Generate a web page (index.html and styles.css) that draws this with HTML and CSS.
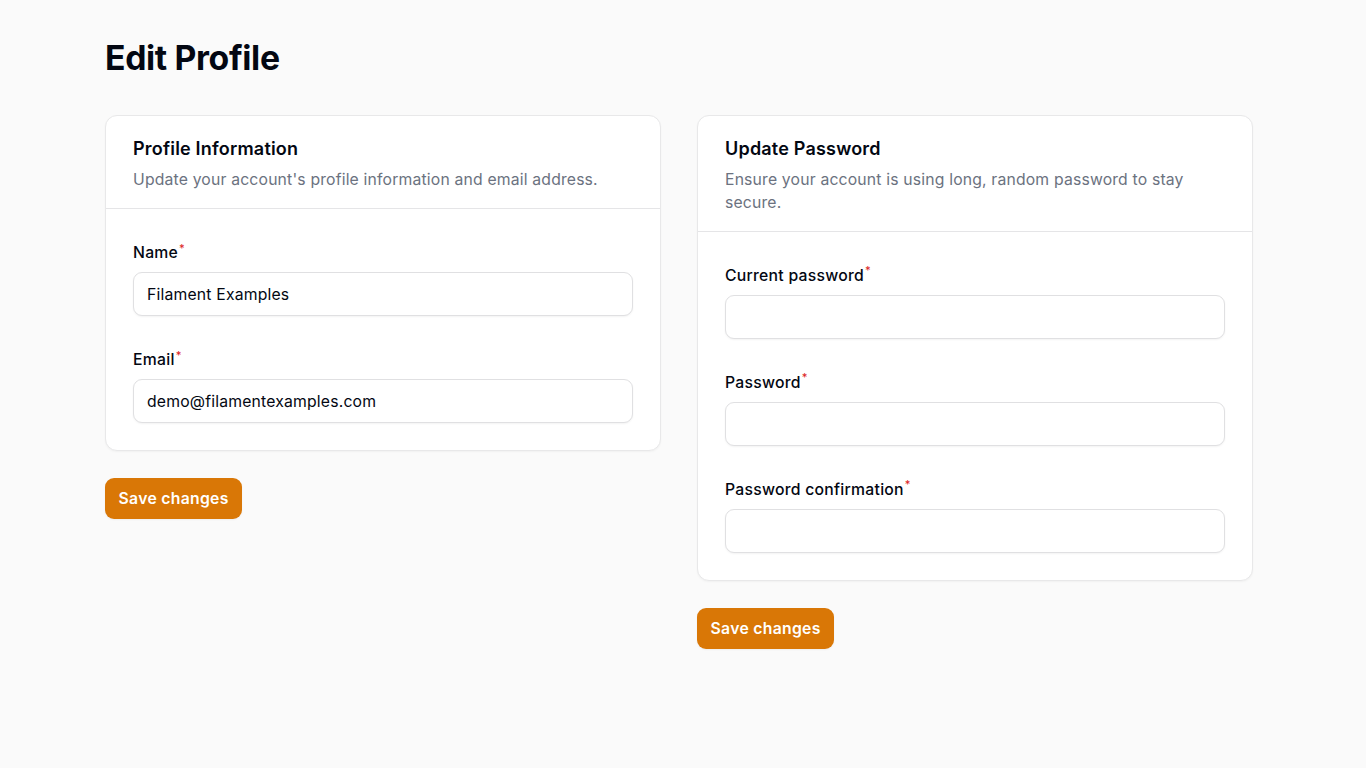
FILE: index.html
```html
<!DOCTYPE html>
<html lang="en">
<head>
    <meta charset="UTF-8">
    <meta name="viewport" content="width=device-width, initial-scale=1.0">
    <title>Edit Profile</title>
    <link rel="stylesheet" href="styles.css">
</head>
<body>
    <main class="page">
        <h1 class="page-title">Edit Profile</h1>

        <div class="columns">
            <form class="column">
                <section class="card">
                    <header class="card-header">
                        <h2 class="card-title">Profile Information</h2>
                        <p class="card-desc">Update your account's profile information and email address.</p>
                    </header>
                    <div class="card-body">
                        <div class="field">
                            <label class="field-label" for="name">Name<sup class="req">*</sup></label>
                            <input class="field-input" type="text" id="name" value="Filament Examples">
                        </div>
                        <div class="field">
                            <label class="field-label" for="email">Email<sup class="req">*</sup></label>
                            <input class="field-input" type="email" id="email" value="demo@filamentexamples.com">
                        </div>
                    </div>
                </section>
                <button type="submit" class="btn">Save changes</button>
            </form>

            <form class="column">
                <section class="card">
                    <header class="card-header">
                        <h2 class="card-title">Update Password</h2>
                        <p class="card-desc">Ensure your account is using long, random password to stay secure.</p>
                    </header>
                    <div class="card-body">
                        <div class="field">
                            <label class="field-label" for="current_password">Current password<sup class="req">*</sup></label>
                            <input class="field-input" type="password" id="current_password">
                        </div>
                        <div class="field">
                            <label class="field-label" for="password">Password<sup class="req">*</sup></label>
                            <input class="field-input" type="password" id="password">
                        </div>
                        <div class="field">
                            <label class="field-label" for="password_confirmation">Password confirmation<sup class="req">*</sup></label>
                            <input class="field-input" type="password" id="password_confirmation">
                        </div>
                    </div>
                </section>
                <button type="submit" class="btn">Save changes</button>
            </form>
        </div>
    </main>
</body>
</html>
```

FILE: styles.css
```css
html, body {
    margin: 0;
    padding: 0;
    background-color: #fafafa;
    color: #030712;
    font-family: Inter, "Noto Sans", Arial, sans-serif;
}

.page {
    width: 1148px;
    padding: 38px 0 36px 105px;
}

.page-title {
    margin: 0 0 36px 0;
    font-size: 33.75px;
    line-height: 40.5px;
    font-weight: 700;
    letter-spacing: -0.35px;
}

.columns {
    display: grid;
    grid-template-columns: 1fr 1fr;
    column-gap: 36px;
    align-items: start;
}

.column {
    display: flex;
    flex-direction: column;
    align-items: flex-start;
    gap: 27px;
}

.card {
    align-self: stretch;
    background: #ffffff;
    border: 1px solid #e8e8e9;
    border-radius: 12px;
    box-shadow: 0 1px 2px rgba(0, 0, 0, 0.04);
}

.card-header {
    padding: 19px 27px 16.5px 27px;
    border-bottom: 1px solid #e5e5e7;
}

.card-title {
    margin: 0;
    font-size: 18px;
    line-height: 27px;
    font-weight: 600;
    letter-spacing: 0.2px;
}

.card-desc {
    margin: 7.5px 0 0 0;
    font-size: 15.75px;
    line-height: 22.5px;
    color: #6b7280;
    letter-spacing: 0.17px;
}

.card-body {
    padding: 27px;
    display: flex;
    flex-direction: column;
    gap: 27px;
}

.field {
    display: flex;
    flex-direction: column;
    gap: 6px;
}

.field-label {
    padding-top: 3px;
    font-size: 15.75px;
    line-height: 27px;
    font-weight: 500;
    letter-spacing: 0.25px;
}

.req {
    color: #dc2626;
    font-weight: 500;
    font-size: 11px;
    line-height: 0;
    margin-left: 1px;
}

.field-input {
    box-sizing: border-box;
    width: 100%;
    height: 44px;
    padding: 0 13px;
    border: 1px solid #e0e0e2;
    border-radius: 9px;
    background: #ffffff;
    box-shadow: 0 1px 2px rgba(0, 0, 0, 0.05);
    font-family: inherit;
    font-size: 15.75px;
    letter-spacing: 0.18px;
    color: #030712;
    outline: none;
}

.btn {
    padding: 9px 13.5px;
    border: none;
    border-radius: 9px;
    background-color: #d97706;
    color: #ffffff;
    font-family: inherit;
    font-size: 15.75px;
    line-height: 23px;
    font-weight: 600;
    letter-spacing: 0.3px;
    box-shadow: 0 1px 2px rgba(0, 0, 0, 0.05);
    cursor: pointer;
}
```
